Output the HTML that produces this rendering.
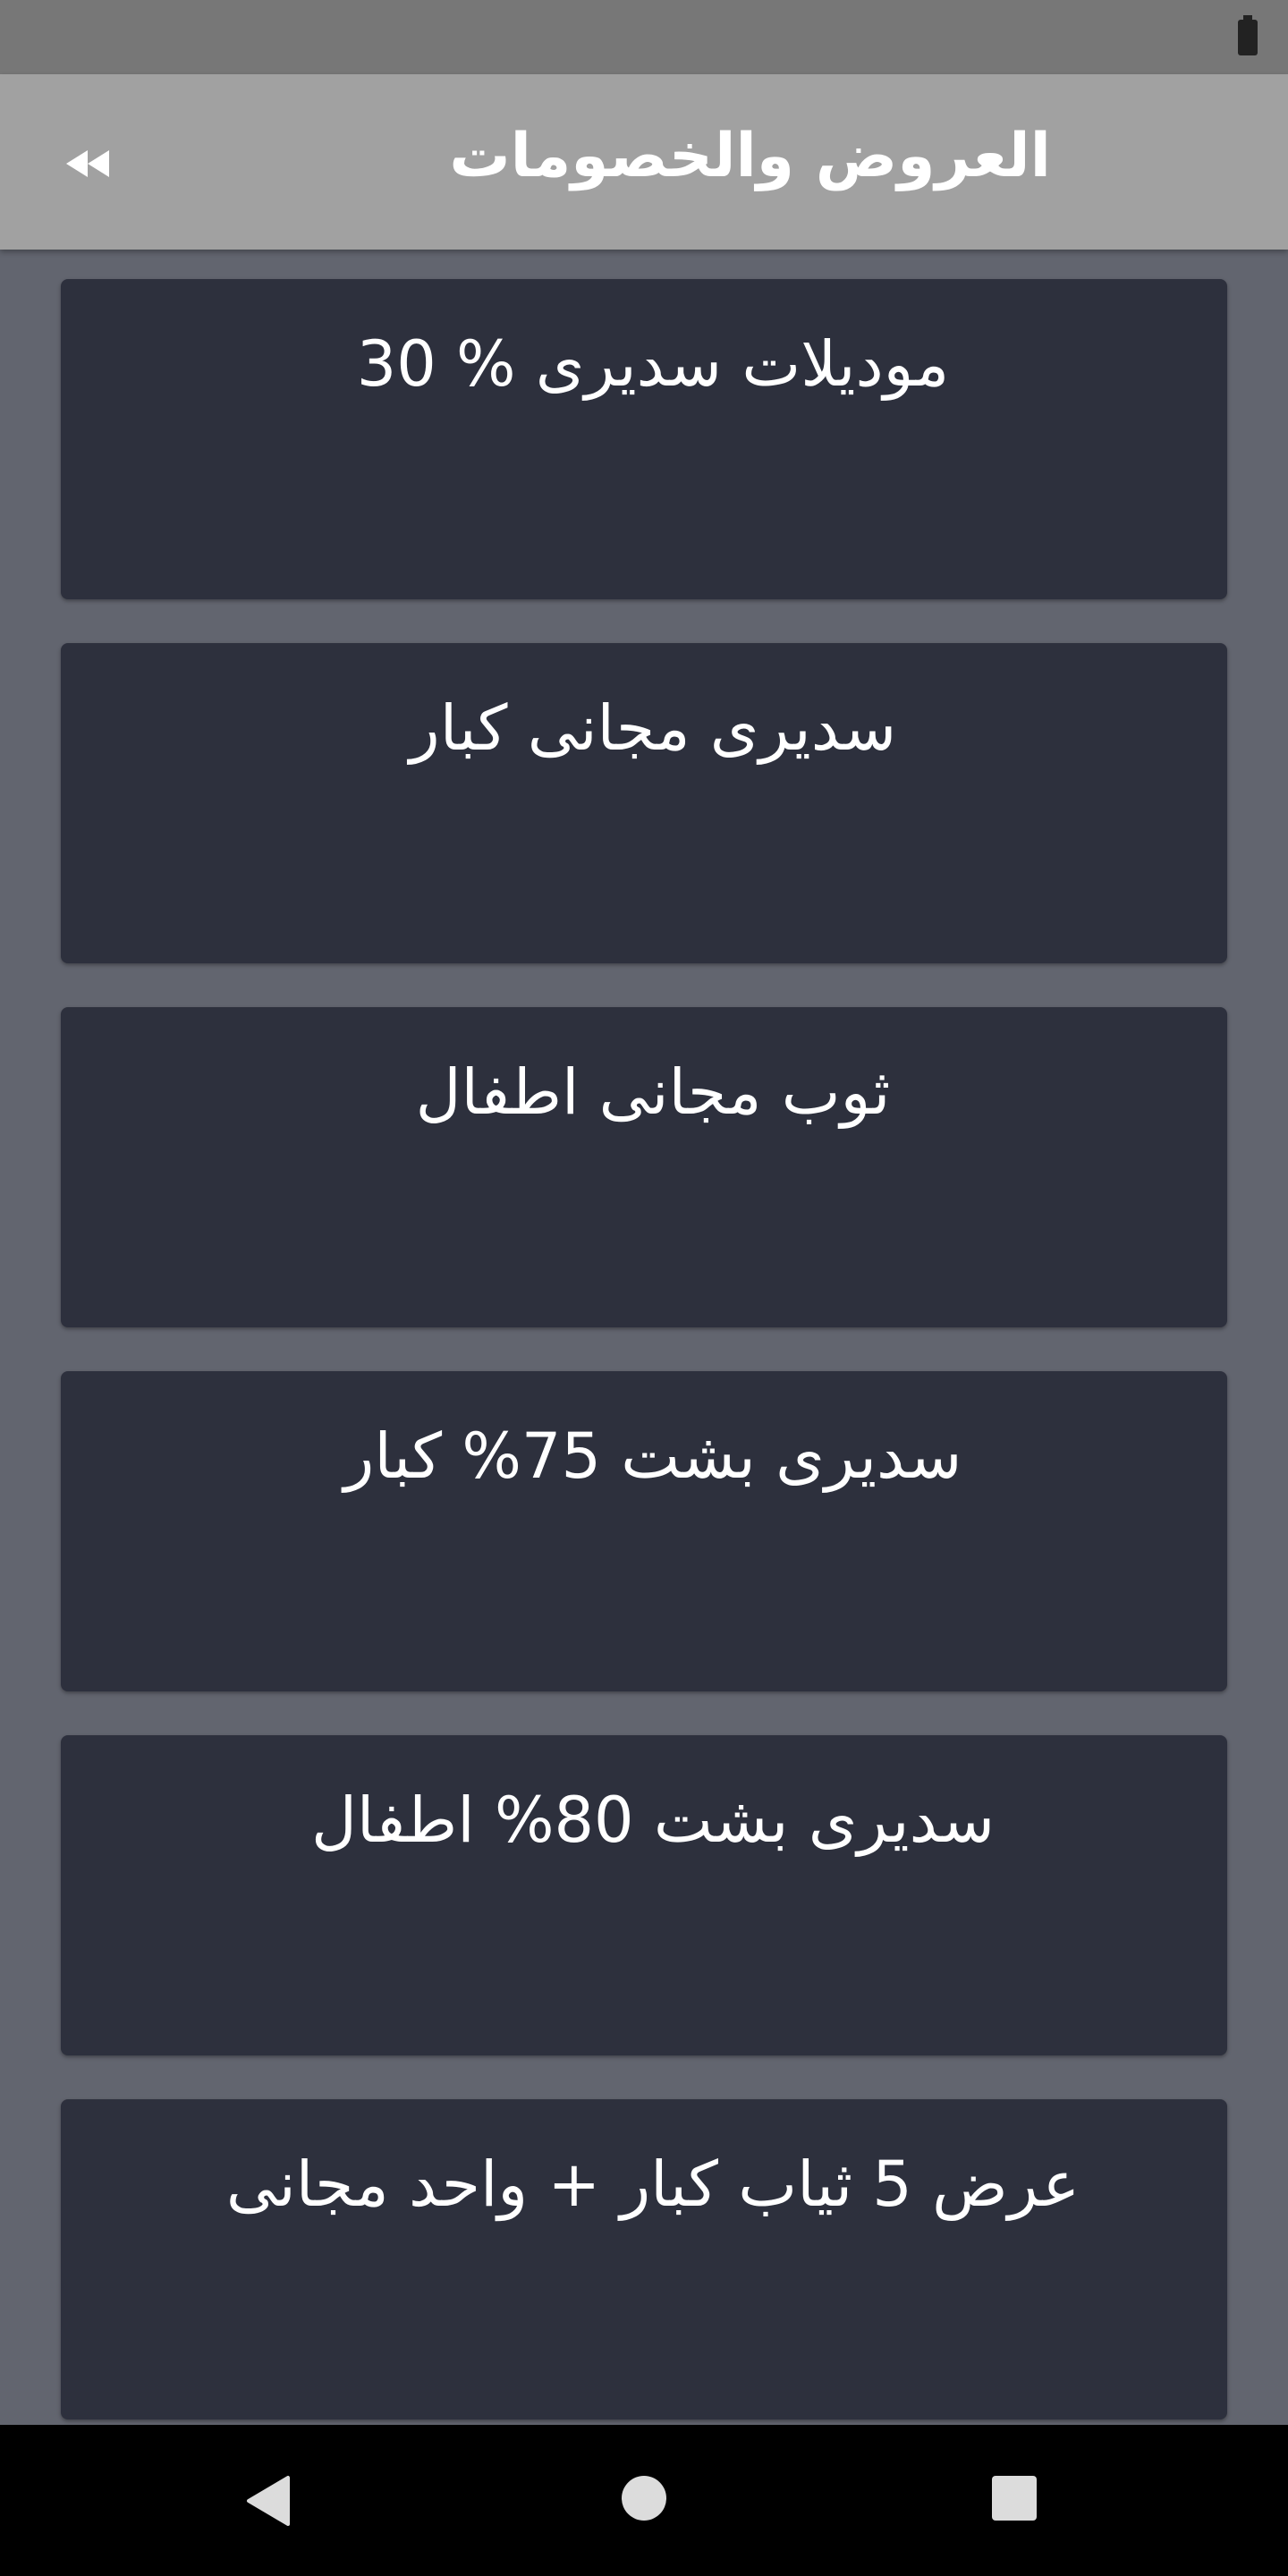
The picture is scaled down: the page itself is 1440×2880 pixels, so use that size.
<!DOCTYPE html>
<html><head><meta charset="utf-8"><style>
*{margin:0;padding:0;box-sizing:border-box}
body{width:1440px;height:2880px;background:#62656f;position:relative;overflow:hidden;font-family:"Liberation Sans","DejaVu Sans",sans-serif}
.status{position:absolute;left:0;top:0;width:1440px;height:83px;background:#777777}
.bat{position:absolute;left:1384px;top:22px;width:22px;height:40px;background:#222;border-radius:3px}
.bat:before{content:"";position:absolute;left:6px;top:-5px;width:10px;height:6px;background:#222}
.header{position:absolute;left:0;top:83px;width:1440px;height:196px;background:#a1a1a1;box-shadow:0 3px 6px rgba(0,0,0,.3)}
.title{position:absolute;right:265px;top:-6px;height:196px;line-height:196px;color:#fff;font-size:68px;font-weight:bold;direction:rtl;font-family:"DejaVu Sans",sans-serif}
.card{position:absolute;left:68px;width:1304px;height:358px;background:#2d303d;border-radius:8px;box-shadow:0 2px 4px rgba(0,0,0,.35)}
.card span{position:absolute;left:20px;right:0;top:53px;text-align:center;color:#fff;font-size:70px;direction:rtl;font-family:"DejaVu Sans",sans-serif;line-height:84px}
.nav{position:absolute;left:0;top:2711px;width:1440px;height:169px;background:#000}
</style></head><body>
<div class="status"><div class="bat"></div></div>
<div class="header">
<svg style="position:absolute;left:70px;top:80px" width="56" height="40" viewBox="0 0 56 40"><path d="M4 20 L28 5 L28 35 Z M28 20 L52 5 L52 35 Z" fill="#fff"/></svg>
<div class="title">العروض والخصومات</div>
</div>
<div class="card" style="top:312px"><span>موديلات سديرى % 30</span></div>
<div class="card" style="top:719px"><span>سديرى مجانى كبار</span></div>
<div class="card" style="top:1126px"><span>ثوب مجانى اطفال</span></div>
<div class="card" style="top:1533px"><span>سديرى بشت 75% كبار</span></div>
<div class="card" style="top:1940px"><span>سديرى بشت 80% اطفال</span></div>
<div class="card" style="top:2347px"><span>عرض 5 ثياب كبار + واحد مجانى</span></div>
<div class="nav">
<svg style="position:absolute;left:272px;top:55px" width="56" height="60" viewBox="0 0 56 60"><path d="M50 4 L50 56 L6 30 Z" fill="#dcdcdc" stroke="#dcdcdc" stroke-width="4" stroke-linejoin="round"/></svg>
<div style="position:absolute;left:695px;top:57px;width:50px;height:50px;border-radius:50%;background:#dcdcdc"></div>
<div style="position:absolute;left:1109px;top:57px;width:50px;height:50px;border-radius:4px;background:#dcdcdc"></div>
</div>
</body></html>
